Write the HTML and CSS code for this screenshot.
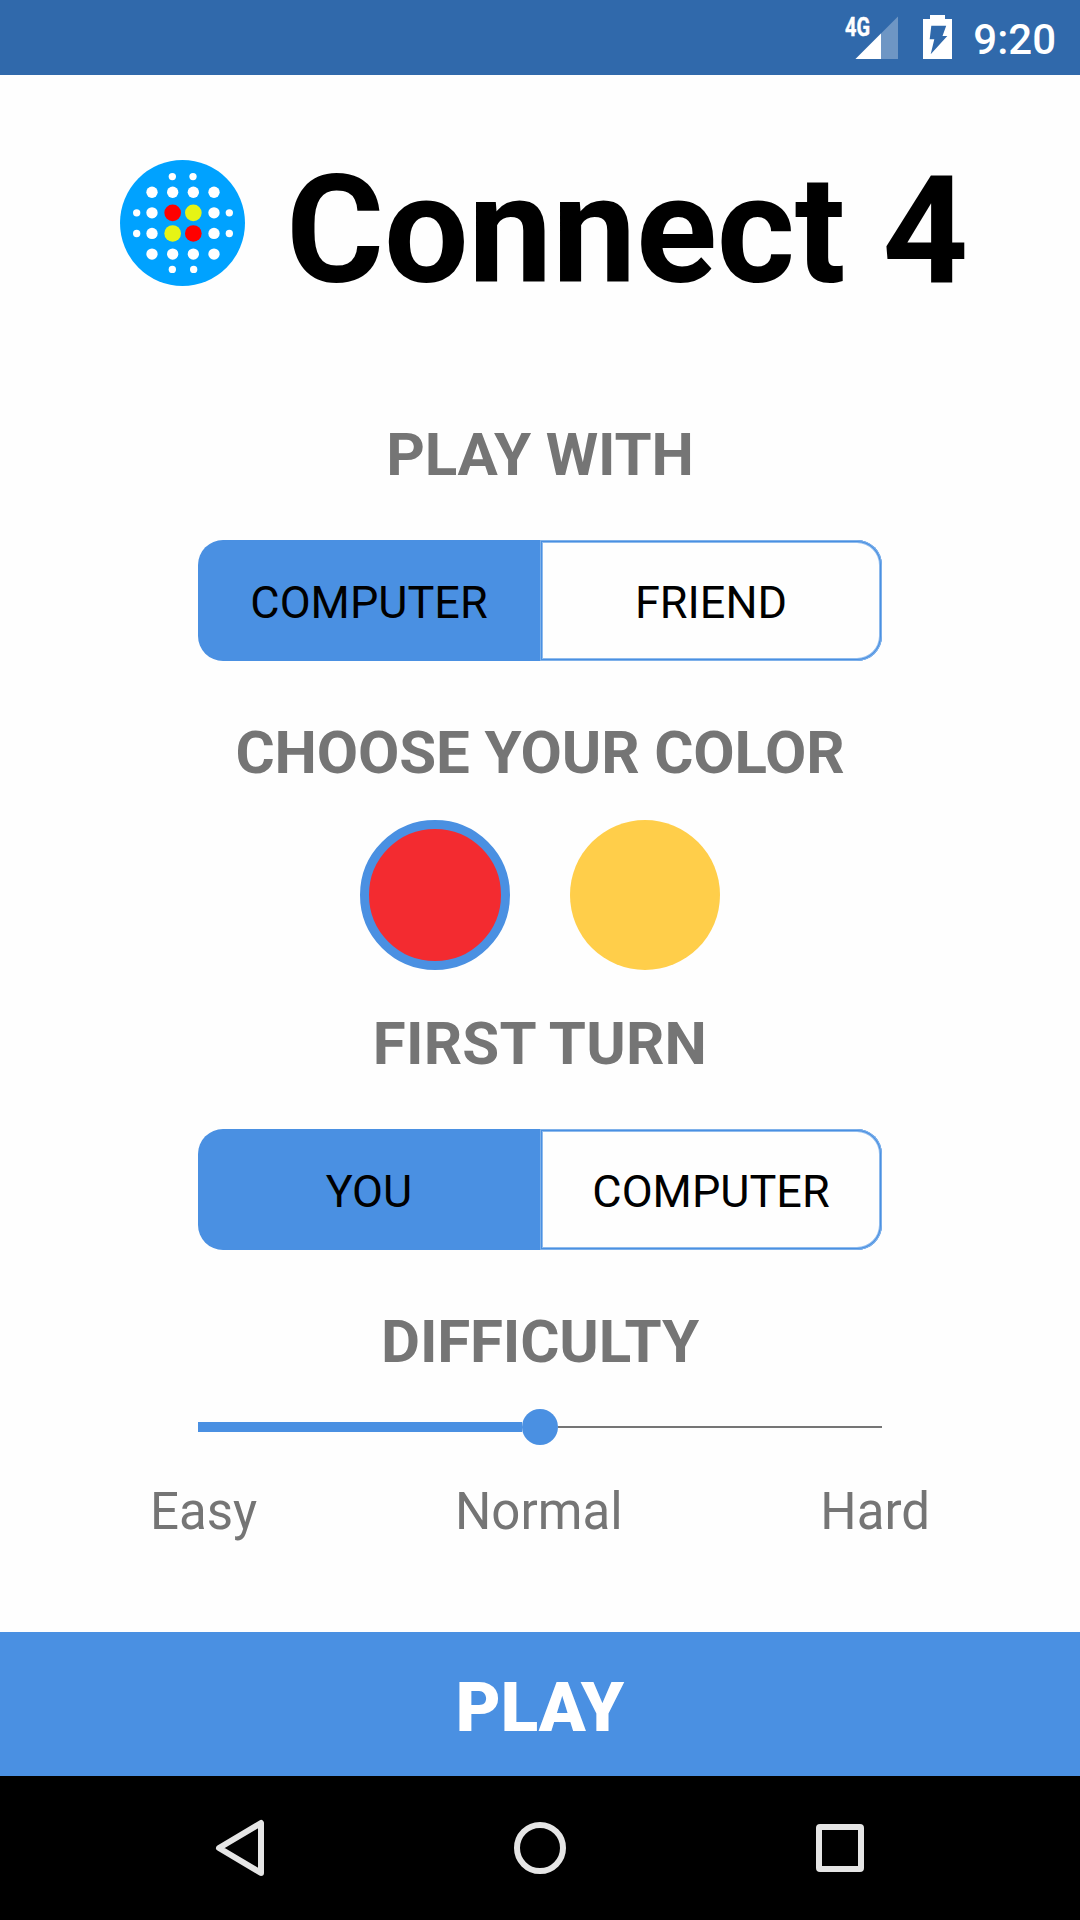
FILE: index.html
```html
<!DOCTYPE html>
<html lang="en">
<head>
<meta charset="utf-8">
<title>Connect 4</title>
<link rel="stylesheet" href="styles.css">
</head>
<body>
<div class="screen">
  <header class="status-bar">
    <svg class="signal" viewBox="0 0 54 46" width="54" height="46">
      <path d="M54 3.500V46H11.500Z" fill="#fff" fill-opacity=".3"/>
      <path d="M37 20.500V46H11.500Z" fill="#fff"/>
      <text class="network" x="1" y="22.500" textLength="25" lengthAdjust="spacingAndGlyphs">4G</text>
    </svg>
    <svg class="battery" viewBox="0 0 29 44" width="29" height="44">
      <path fill="#fff" fill-rule="evenodd" d="M7 0H22V4H29V44H0V4H7ZM8.300 10.700L6.700 24.300H11.300L7.700 39.300L24.300 21H19.500L23.200 10.700Z"/>
    </svg>
    <span class="clock">9:20</span>
  </header>

  <main class="content">
    <div class="brand">
      <svg class="logo" viewBox="60 59 375 379" preserveAspectRatio="none" width="125" height="126">
        <ellipse cx="247.500" cy="248.500" rx="187.500" ry="189.500" fill="#00a2ff"/>
        <g fill="#fff">
          <circle cx="217" cy="109" r="11"/><circle cx="279" cy="109" r="11"/>
          <circle cx="156" cy="156" r="17"/><circle cx="218" cy="156" r="17"/><circle cx="280" cy="156" r="17"/><circle cx="342" cy="156" r="17"/>
          <circle cx="110" cy="218" r="11"/><circle cx="156" cy="218" r="17"/><circle cx="342" cy="218" r="17"/><circle cx="388" cy="218" r="11"/>
          <circle cx="110" cy="280" r="11"/><circle cx="156" cy="280" r="17"/><circle cx="342" cy="280" r="17"/><circle cx="388" cy="280" r="11"/>
          <circle cx="156" cy="342" r="17"/><circle cx="218" cy="342" r="17"/><circle cx="280" cy="342" r="17"/><circle cx="342" cy="342" r="17"/>
          <circle cx="217" cy="388" r="11"/><circle cx="281" cy="388" r="11"/>
        </g>
        <g fill="#f00"><circle cx="218" cy="218" r="25"/><circle cx="280" cy="280" r="25"/></g>
        <g fill="#e6f415"><circle cx="280" cy="218" r="25"/><circle cx="218" cy="280" r="25"/></g>
      </svg>
      <h1 class="title">Connect 4</h1>
    </div>

    <h2 class="heading">PLAY WITH</h2>
    <div class="toggle">
      <div class="option selected">COMPUTER</div>
      <div class="option">FRIEND</div>
    </div>

    <h2 class="heading">CHOOSE YOUR COLOR</h2>
    <div class="colors">
      <div class="disc red"></div>
      <div class="disc yellow"></div>
    </div>

    <h2 class="heading wide">FIRST TURN</h2>
    <div class="toggle">
      <div class="option selected">YOU</div>
      <div class="option">COMPUTER</div>
    </div>

    <h2 class="heading">DIFFICULTY</h2>
    <div class="slider">
      <div class="filled"></div>
      <div class="thumb"></div>
      <div class="track"></div>
    </div>
    <div class="levels">
      <span>Easy</span>
      <span>Normal</span>
      <span>Hard</span>
    </div>
  </main>

  <div class="play">PLAY</div>

  <nav class="nav-bar">
    <svg viewBox="0 0 60 60" width="60" height="60"><path d="M9 30L51 5V55Z"/></svg>
    <svg viewBox="0 0 60 60" width="60" height="60"><circle cx="30" cy="30" r="23"/></svg>
    <svg viewBox="0 0 60 60" width="60" height="60"><rect x="9" y="9" width="42" height="42" rx="1"/></svg>
  </nav>
</div>
</body>
</html>
```
FILE: styles.css
```css
* {
  box-sizing: border-box;
}

body {
  margin: 0;
  font-family: Roboto, "Liberation Sans", sans-serif;
  background: #fefefe;
}

.screen {
  display: flex;
  flex-direction: column;
  width: 1080px;
  height: 1920px;
}

.status-bar {
  display: flex;
  justify-content: flex-end;
  align-items: flex-start;
  height: 75px;
  padding: 13px 24px 0 0;
  background: #3069ab;
  color: #fff;
}

.signal {
  margin-right: 25px;
}

.battery {
  margin: 2px 21px 0 0;
}

.network {
  font-size: 26px;
  font-weight: 700;
  fill: #fff;
  stroke: #fff;
  stroke-width: 0.5;
}

.clock {
  font-size: 42px;
  font-weight: 500;
  line-height: 54px;
}

.content {
  flex: 1;
  display: flex;
  flex-direction: column;
  align-items: center;
}

.brand {
  display: flex;
  align-items: flex-start;
  align-self: stretch;
  height: 340px;
  padding: 85px 0 0 120px;
}

.title {
  margin: -17px 0 0 41px;
  font-size: 150px;
  font-weight: 700;
  line-height: 176px;
  letter-spacing: -0.25px;
  white-space: nowrap;
  color: #000;
}

.heading {
  margin: 0;
  font-size: 60px;
  font-weight: 700;
  line-height: 80px;
  letter-spacing: -0.15px;
  color: #757575;
}

.heading.wide {
  letter-spacing: 0.2px;
}

.toggle {
  display: flex;
  width: 684px;
  height: 121px;
  margin: 45px 0 52px;
}

.option {
  flex: 1;
  border-radius: 0 25px 25px 0;
  box-shadow: inset 0 0 0 1px #7fb1ea, inset 0 0 0 2px #4a90e2, inset 0 0 0 3px #8fbbed;
  font-size: 45px;
  line-height: 125px;
  text-align: center;
  color: #000;
}

.option.selected {
  border-radius: 25px 0 0 25px;
  background: #4a90e2;
  box-shadow: none;
}

.colors {
  display: flex;
  gap: 60px;
  margin: 27px 0 34px;
}

.disc {
  width: 150px;
  height: 150px;
  border-radius: 50%;
}

.red {
  border: 9px solid #4a90e2;
  background: #f32b30;
}

.yellow {
  background: #ffce4a;
}

.slider {
  display: flex;
  align-items: center;
  width: 684px;
  height: 36px;
  margin-top: 27px;
}

.filled {
  flex: 1;
  height: 10px;
  background: #4a90e2;
}

.thumb {
  width: 36px;
  height: 36px;
  border-radius: 50%;
  background: #4a90e2;
}

.track {
  flex: 1;
  height: 2px;
  background: #757575;
}

.levels {
  display: flex;
  justify-content: space-between;
  width: 780px;
  margin-top: 37px;
  font-size: 51px;
  line-height: 60px;
  color: #757575;
}

.play {
  height: 144px;
  background: #4a90e2;
  font-size: 69px;
  font-weight: 900;
  line-height: 151px;
  text-align: center;
  color: #fff;
}

.nav-bar {
  display: flex;
  justify-content: center;
  align-items: center;
  gap: 240px;
  height: 144px;
  background: #000;
}

.nav-bar svg {
  fill: none;
  stroke: #e5e5e5;
  stroke-width: 6;
  stroke-linejoin: round;
}
```
